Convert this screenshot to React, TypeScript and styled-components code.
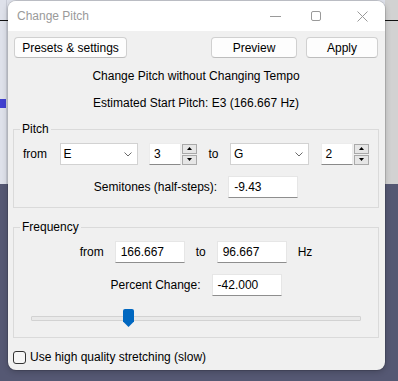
import React from 'react';
import styled, { createGlobalStyle } from 'styled-components';

const Global = createGlobalStyle`
  html, body { margin: 0; padding: 0; }
  body {
    width: 398px; height: 381px; overflow: hidden;
    font-family: "Liberation Sans", Arial, sans-serif;
    font-size: 12px; color: #000;
  }
`;

const Desktop = styled.div`
  width: 398px; height: 381px; overflow: hidden; box-sizing: border-box;
  padding: 1px 0 0 8px;
  background:
    linear-gradient(#111, #111) 0 20px / 100% 1px no-repeat,
    linear-gradient(#4040d0, #4040d0) 0 99px / 6px 9px no-repeat,
    linear-gradient(#c9ccd7, #c9ccd7) 6px 0 / 1px 184px no-repeat,
    linear-gradient(#d2d2d2, #d2d2d2) right 0 top 0 / 13px 184px no-repeat,
    linear-gradient(to bottom, #dee1ea 0, #dee1ea 184px, #555873 184px);
`;

const Window = styled.div`
  width: 377px; height: 369px; background: #f0f0f0; border-radius: 8px;
  overflow: hidden; display: flex; flex-direction: column;
  box-shadow: 0 0 0 1px rgba(0, 0, 0, 0.12), 0 2px 6px rgba(0, 0, 0, 0.2);
`;

const TitleBar = styled.div`
  height: 30px; flex: none; background: #fff; display: flex; align-items: center;
`;

const Title = styled.div`
  flex: 1; padding-left: 9px; color: #9a9a9a; font-size: 12px;
`;

const CaptionButton = styled.div<{ $w: number }>`
  width: ${p => p.$w}px; height: 30px; display: flex; align-items: center; justify-content: center;
  color: #9a9a9a;
`;

const Body = styled.div`
  flex: 1; display: flex; flex-direction: column; padding: 0 6px 0 5px;
`;

const ButtonRow = styled.div`
  margin-top: 6px; padding: 0 1px; display: flex; align-items: center; gap: 9px;
`;

const Spacer = styled.div`flex: 1;`;

const PushButton = styled.div<{ $w: number }>`
  width: ${p => p.$w}px; height: 21px; box-sizing: border-box;
  background: #fdfdfd; border: 1px solid #d0d0d0; border-bottom-color: #bdbdbd;
  border-radius: 4px; display: flex; align-items: center; justify-content: center;
  font-size: 12px;
`;

const Heading = styled.div<{ $mt: number }>`
  margin-top: ${p => p.$mt}px; text-align: center; line-height: 16px;
`;

const Group = styled.fieldset<{ $mt: number; $pb: number }>`
  margin: ${p => p.$mt}px 0 0 0; padding: 0 0 ${p => p.$pb}px 0;
  border: 1px solid #dadada; min-width: 0;
`;

const Legend = styled.legend`
  margin-left: 6px; padding: 0 2px; line-height: 16px; font-size: 12px;
`;

const PitchRow = styled.div`
  margin-top: 6px; padding-left: 9px; display: flex; align-items: center; gap: 11.5px;
`;

const CenterRow = styled.div<{ $mt: number }>`
  margin-top: ${p => p.$mt}px; display: flex; align-items: center; justify-content: center; gap: 11px;
`;

const Label = styled.span<{ $w?: number }>`
  ${p => (p.$w ? `width: ${p.$w}px;` : '')}
  white-space: nowrap; line-height: 16px;
`;

const Combo = styled.div<{ $w: number }>`
  width: ${p => p.$w}px; height: 22px; box-sizing: border-box;
  background: #fff; border: 1px solid #d2d2d2;
  display: flex; align-items: center; padding: 0 5px 0 3px;
`;

const ComboText = styled.span`flex: 1;`;

const Spin = styled.div`
  display: flex; align-items: center; gap: 1px;
`;

const SpinText = styled.div`
  width: 32px; height: 22px; box-sizing: border-box; background: #fff;
  border: 1px solid #ececec; border-bottom-color: #8a8a8a;
  display: flex; align-items: center; padding-left: 4px;
`;

const SpinButtons = styled.div`
  display: flex; flex-direction: column; gap: 1px;
`;

const SpinButton = styled.div`
  width: 15px; height: 10px; box-sizing: border-box; background: #e6e6e6;
  border: 1px solid #a9a9a9; display: flex; align-items: center; justify-content: center;
`;

const TextField = styled.div`
  width: 70px; height: 22px; box-sizing: border-box; background: #fff;
  border: 1px solid #e6e6e6; border-bottom-color: #8e8e8e;
  display: flex; align-items: center; padding-left: 5px;
`;

const Slider = styled.div`
  margin: 12px 17px 0 17px; height: 20px; position: relative;
  display: flex; align-items: center;
`;

const Track = styled.div`
  flex: 1; height: 5px; box-sizing: border-box; background: #e9e9e9;
  border: 1px solid #d2d2d2; border-radius: 1px;
`;

const Thumb = styled.div`
  position: absolute; top: 1px; width: 11px; height: 18px; background: #0067c0;
  border-radius: 2px 2px 0 0;
  clip-path: polygon(0 0, 100% 0, 100% 70%, 50% 100%, 0 70%);
`;

const CheckRow = styled.label`
  margin-top: 11px; display: flex; align-items: center; gap: 4px;
`;

const CheckBox = styled.span`
  width: 13px; height: 13px; box-sizing: border-box; border: 1px solid #333;
  border-radius: 3px; background: #f6f6f6;
`;

const Chevron = () => (
  <svg width="8" height="5" viewBox="0 0 8 5">
    <polyline points="0.5,0.5 4,4 7.5,0.5" fill="none" stroke="#6a6a6a" strokeWidth="1" />
  </svg>
);

const Tri = ({ up }: { up: boolean }) => (
  <svg width="5" height="3" viewBox="0 0 5 3">
    <polygon points={up ? '2.5,0 5,3 0,3' : '0,0 5,0 2.5,3'} fill="#000" />
  </svg>
);

const SpinBox = ({ value }: { value: string }) => (
  <Spin>
    <SpinText>{value}</SpinText>
    <SpinButtons>
      <SpinButton><Tri up /></SpinButton>
      <SpinButton><Tri up={false} /></SpinButton>
    </SpinButtons>
  </Spin>
);

export default function App() {
  return (
    <>
      <Global />
      <Desktop>
        <Window>
          <TitleBar>
            <Title>Change Pitch</Title>
            <CaptionButton $w={36}>
              <svg width="11" height="1" viewBox="0 0 11 1"><rect width="11" height="1" fill="#9a9a9a" /></svg>
            </CaptionButton>
            <CaptionButton $w={46}>
              <svg width="10" height="10" viewBox="0 0 10 10"><rect x="0.5" y="0.5" width="9" height="9" rx="1.5" fill="none" stroke="#9a9a9a" /></svg>
            </CaptionButton>
            <CaptionButton $w={46}>
              <svg width="11" height="11" viewBox="0 0 11 11"><path d="M0.5 0.5 L10.5 10.5 M10.5 0.5 L0.5 10.5" stroke="#9a9a9a" strokeWidth="1" /></svg>
            </CaptionButton>
          </TitleBar>
          <Body>
            <ButtonRow>
              <PushButton $w={113}>Presets &amp; settings</PushButton>
              <Spacer />
              <PushButton $w={86}>Preview</PushButton>
              <PushButton $w={72}>Apply</PushButton>
            </ButtonRow>
            <Heading $mt={10}>Change Pitch without Changing Tempo</Heading>
            <Heading $mt={11}>Estimated Start Pitch: E3 (166.667 Hz)</Heading>
            <Group $mt={10} $pb={9}>
              <Legend>Pitch</Legend>
              <PitchRow>
                <Label $w={25}>from</Label>
                <Combo $w={78}><ComboText>E</ComboText><Chevron /></Combo>
                <SpinBox value="3" />
                <Label $w={10}>to</Label>
                <Combo $w={79}><ComboText>G</ComboText><Chevron /></Combo>
                <SpinBox value="2" />
              </PitchRow>
              <CenterRow $mt={11}>
                <Label>Semitones (half-steps):</Label>
                <TextField>-9.43</TextField>
              </CenterRow>
            </Group>
            <Group $mt={11} $pb={9}>
              <Legend>Frequency</Legend>
              <CenterRow $mt={6}>
                <Label>from</Label>
                <TextField>166.667</TextField>
                <Label>to</Label>
                <TextField>96.667</TextField>
                <Label>Hz</Label>
              </CenterRow>
              <CenterRow $mt={11}>
                <Label>Percent Change:</Label>
                <TextField>-42.000</TextField>
              </CenterRow>
              <Slider>
                <Track />
                <Thumb style={{ left: 92 }} />
              </Slider>
            </Group>
            <CheckRow>
              <CheckBox />
              <Label>Use high quality stretching (slow)</Label>
            </CheckRow>
          </Body>
        </Window>
      </Desktop>
    </>
  );
}
